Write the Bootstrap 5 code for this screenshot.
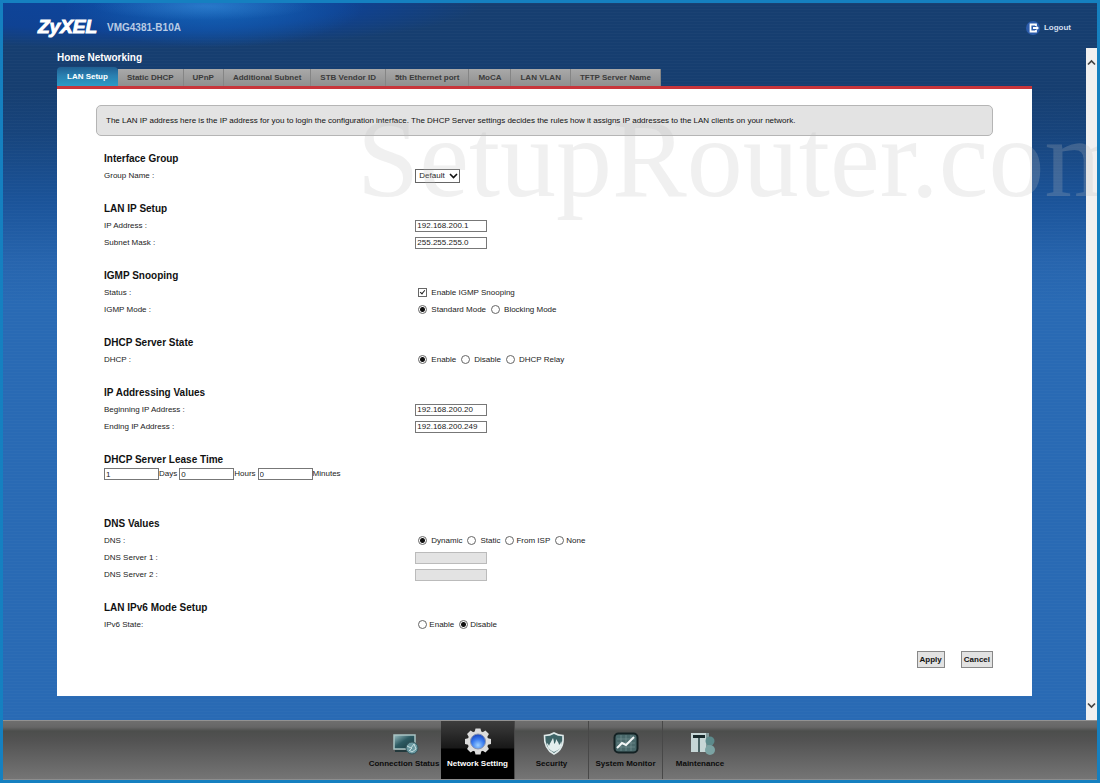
<!DOCTYPE html>
<html lang="en">
<head>
<meta charset="utf-8">
<meta name="viewport" content="width=device-width, initial-scale=1">
<title>VMG4381-B10A - Home Networking</title>
<link href="https://cdn.jsdelivr.net/npm/bootstrap@5.3.0/dist/css/bootstrap.min.css" rel="stylesheet">
<style>
  body { font-family: "Liberation Sans", Arial, sans-serif; font-size: 8px; line-height: 12px; color: #222; }
  .frame { border: 3px solid #1580c0; min-height: 100vh; overflow: hidden;
    background:
      repeating-linear-gradient(rgba(255,255,255,.02) 0 1px, transparent 1px 3px),
      linear-gradient(#163e70 0, #163e70 85px, #17447c 130px, #1b549a 200px, #2765ae 260px, #296ab4 300px, #296ab4 100%); }
  .topbar { height: 45px; padding: 4px 26px 0 34px;
    background:
      radial-gradient(ellipse 110px 14px at 200px 3px, rgba(80,160,235,.35) 0, rgba(80,160,235,0) 100%),
      radial-gradient(ellipse 150px 40px at 210px 4px, #1464b8 0, rgba(20,90,180,0) 100%),
      radial-gradient(ellipse 350px 46px at 130px 0, #0d459c 0, #0f4293 60%, rgba(22,62,112,0) 100%); }
  .model { font-size: 10px; font-weight: bold; color: #b9cbe4; }
  .logout { color: #d3deee; font-weight: bold; text-decoration: none; }
  .stage { padding: 0 54px 24px; }
  .page-title { font-size: 10px; line-height: 12px; font-weight: bold; color: #fff; margin: 4px 0 3px; }
  .tabs { border-bottom: 3px solid #c8353b; height: 22px; }
  .tabs .nav-link { height: 17px; line-height: 17px; padding: 0 9px; font-size: 8px; font-weight: bold; color: #3b3b3b;
    border-right: 1px solid #858585; border-radius: 0; background: linear-gradient(#a9a9a9, #8f8f8f); }
  .tabs .nav-link.active { height: 19px; line-height: 20px; padding: 0 10px; color: #fff; border: 0; border-radius: 4px 4px 0 0;
    background: linear-gradient(#1f5f92 0, #2a7fb0 45%, #2b9bc6 100%); }
  .sheet { background: #fff; padding: 16px 39px 28px; }
  .notice { font-size: 8px; line-height: 29px; border: 1px solid #b5b5b5; border-radius: 5px; background: #e3e3e3; padding: 0 9px; color: #111; }
  .fields { padding: 14px 8px 2px; }
  .grp { border: 0; margin: 0 0 16px; padding: 0; }
  .grp h2 { font-size: 10px; line-height: 17px; font-weight: bold; color: #111; margin: 0; }
  .line { display: flex; align-items: center; height: 17px; gap: 3px; }
  .line .name { width: 35%; flex: none; }
  .lease { padding-bottom: 19px; }
  .lease label { margin-right: 2px; }
  .choices { padding-left: 3px; }
  .choices label { margin: 0 5px 0 4px; }
  .choices label.tight { margin-left: 2px; }
  .choices input, .box { appearance: none; flex: none; margin: 0; }
  .choices input { width: 9px; height: 9px; border: 1px solid #666; background: #fff; }
  .choices input[type=radio] { border-radius: 50%; }
  .choices input[type=radio]:checked { background: radial-gradient(circle, #111 0 2px, #fff 3px); }
  .choices input[type=checkbox] { position: relative; }
  .choices input[type=checkbox]:checked::after { content: ""; position: absolute; left: 2px; top: 0; width: 3px; height: 5px;
    border: solid #222; border-width: 0 1px 1px 0; transform: rotate(40deg); }
  .box { width: 72px; height: 12px; border: 1px solid #777; border-radius: 0; padding: 0 1px; font-size: 8px; line-height: 10px; color: #222; background: #fff; }
  .box:disabled { background: #e3e3e3; border-color: #bbb; }
  .box-sm { width: 55px; }
  .pick { position: relative; }
  .pick select { appearance: none; width: 45px; height: 14px; border: 1px solid #666; border-radius: 0; background: #fff; padding: 0 3px; font-size: 8px; line-height: 12px; color: #222; }
  .pick svg { position: absolute; right: 2px; top: 4px; pointer-events: none; }
  .cmd { font-size: 8px; line-height: 15px; font-weight: bold; color: #111; background: #e2e2e2; border: 1px solid #888; border-radius: 0; padding: 0 2px; }
  .rail { width: 11px; flex: none; background: #f0f0f0; padding: 11px 0; }
  .dock { height: 60px; border-top: 1px solid #929292; border-bottom: 1px solid #8d8d8d; padding-left: 4px;
    background: linear-gradient(#6e6e6e 0, #666 6px, #4c4e4c 10px, #535353 20px, #757575 100%); }
  .dock a { width: 74px; color: #0c0c0c; font-weight: bold; text-decoration: none; white-space: nowrap; border-right: 1px solid #484848; padding-top: 9px; }
  .dock a:last-child, .dock a:first-child { border: 0; }
  .dock svg { height: 26px; margin-bottom: 2px; }
  .dock a.current { color: #fff; background: linear-gradient(#3d3d3d 0, #181818 27px, #000 28px); padding-top: 6px; }
  .dock a.current svg { height: 29px; }
  .ghost-mark { position: absolute; left: 354px; top: 91px; font: 112px/128px "Liberation Serif", serif; color: rgba(190,190,190,.23); white-space: nowrap; pointer-events: none; }
</style>
</head>
<body>
<div class="frame d-flex flex-column position-relative">
  <header class="topbar d-flex align-items-center justify-content-between">
    <div class="d-flex align-items-center gap-2">
      <svg width="62" height="26" viewBox="0 0 62 26" overflow="visible" role="img" aria-label="ZyXEL"><text x="1" y="18" font-family="Liberation Sans, sans-serif" font-weight="bold" font-style="italic" font-size="19" fill="#fff" stroke="#fff" stroke-width="1">ZyXEL</text></svg>
      <span class="model">VMG4381-B10A</span>
    </div>
    <a class="logout d-flex align-items-center gap-1" href="#">
      <svg width="14" height="14" viewBox="0 0 14 14"><circle cx="7" cy="7" r="7" fill="#2c5cab"/><path d="M10 5V3.500H4.500v7H10V9M7 7h5" fill="none" stroke="#fff" stroke-width="1.800"/><path d="M10.500 4.800L13 7l-2.500 2.200z" fill="#fff"/></svg>
      Logout
    </a>
  </header>

  <div class="d-flex flex-grow-1">
    <main class="stage flex-grow-1">
      <h1 class="page-title">Home Networking</h1>
      <nav class="tabs nav flex-nowrap align-items-end">
        <a class="nav-link active" href="#">LAN Setup</a>
        <a class="nav-link" href="#">Static DHCP</a>
        <a class="nav-link" href="#">UPnP</a>
        <a class="nav-link" href="#">Additional Subnet</a>
        <a class="nav-link" href="#">STB Vendor ID</a>
        <a class="nav-link" href="#">5th Ethernet port</a>
        <a class="nav-link" href="#">MoCA</a>
        <a class="nav-link" href="#">LAN VLAN</a>
        <a class="nav-link" href="#">TFTP Server Name</a>
      </nav>
      <form class="sheet">
        <div class="notice">The LAN IP address here is the IP address for you to login the configuration interface. The DHCP Server settings decides the rules how it assigns IP addresses to the LAN clients on your network.</div>
        <div class="fields">
          <section class="grp">
            <h2>Interface Group</h2>
            <div class="line"><label class="name" for="group">Group Name :</label>
              <span class="pick d-flex"><select id="group"><option>Default</option></select><svg width="9" height="6" viewBox="0 0 9 6"><path d="M1 1l3.500 3.500L8 1" fill="none" stroke="#111" stroke-width="1.600"/></svg></span></div>
          </section>
          <section class="grp">
            <h2>LAN IP Setup</h2>
            <div class="line"><label class="name" for="ip">IP Address :</label><input class="box" id="ip" type="text" value="192.168.200.1"></div>
            <div class="line"><label class="name" for="mask">Subnet Mask :</label><input class="box" id="mask" type="text" value="255.255.255.0"></div>
          </section>
          <section class="grp">
            <h2>IGMP Snooping</h2>
            <div class="line"><span class="name">Status :</span><span class="choices d-flex align-items-center"><input type="checkbox" id="snoop" checked><label for="snoop">Enable IGMP Snooping</label></span></div>
            <div class="line"><span class="name">IGMP Mode :</span><span class="choices d-flex align-items-center"><input type="radio" name="mode" id="m1" checked><label for="m1">Standard Mode</label><input type="radio" name="mode" id="m2"><label for="m2">Blocking Mode</label></span></div>
          </section>
          <section class="grp">
            <h2>DHCP Server State</h2>
            <div class="line"><span class="name">DHCP :</span><span class="choices d-flex align-items-center"><input type="radio" name="dhcp" id="d1" checked><label for="d1">Enable</label><input type="radio" name="dhcp" id="d2"><label for="d2">Disable</label><input type="radio" name="dhcp" id="d3"><label for="d3">DHCP Relay</label></span></div>
          </section>
          <section class="grp">
            <h2>IP Addressing Values</h2>
            <div class="line"><label class="name" for="first">Beginning IP Address :</label><input class="box" id="first" type="text" value="192.168.200.20"></div>
            <div class="line"><label class="name" for="last">Ending IP Address :</label><input class="box" id="last" type="text" value="192.168.200.249"></div>
          </section>
          <section class="grp lease">
            <h2>DHCP Server Lease Time</h2>
            <div class="d-flex align-items-center">
              <input class="box box-sm" id="days" type="text" value="1"><label for="days">Days</label>
              <input class="box box-sm" id="hours" type="text" value="0"><label for="hours">Hours</label>
              <input class="box box-sm" id="mins" type="text" value="0"><label for="mins">Minutes</label>
            </div>
          </section>
          <section class="grp">
            <h2>DNS Values</h2>
            <div class="line"><span class="name">DNS :</span><span class="choices d-flex align-items-center"><input type="radio" name="dns" id="n1" checked><label for="n1">Dynamic</label><input type="radio" name="dns" id="n2"><label for="n2">Static</label><input type="radio" name="dns" id="n3"><label class="tight" for="n3">From ISP</label><input type="radio" name="dns" id="n4"><label class="tight" for="n4">None</label></span></div>
            <div class="line"><label class="name" for="dns1">DNS Server 1 :</label><input class="box" id="dns1" type="text" disabled></div>
            <div class="line"><label class="name" for="dns2">DNS Server 2 :</label><input class="box" id="dns2" type="text" disabled></div>
          </section>
          <section class="grp">
            <h2>LAN IPv6 Mode Setup</h2>
            <div class="line"><span class="name">IPv6 State:</span><span class="choices d-flex align-items-center"><input type="radio" name="v6" id="v1"><label class="tight" for="v1">Enable</label><input type="radio" name="v6" id="v2" checked><label class="tight" for="v2">Disable</label></span></div>
          </section>
        </div>
        <div class="d-flex justify-content-end gap-3">
          <button class="cmd" type="button">Apply</button>
          <button class="cmd" type="button">Cancel</button>
        </div>
      </form>
    </main>
    <div class="rail d-flex flex-column justify-content-between align-items-center">
      <svg width="9" height="7" viewBox="0 0 9 7"><path d="M1 5.500l3.500-3.500L8 5.500" fill="none" stroke="#444" stroke-width="1.700"/></svg>
      <svg width="9" height="7" viewBox="0 0 9 7"><path d="M1 1.500L4.500 5 8 1.500" fill="none" stroke="#444" stroke-width="1.700"/></svg>
    </div>
  </div>

  <nav class="dock d-flex justify-content-center">
    <a class="d-flex flex-column align-items-center" href="#">
      <svg width="30" height="26" viewBox="0 0 30 26"><defs><linearGradient id="scr" x2="1" y2="1"><stop stop-color="#9cc0c4"/><stop offset=".45" stop-color="#2d5a62"/><stop offset="1" stop-color="#16363c"/></linearGradient></defs><path d="M5 5h21v14H5z" fill="url(#scr)" stroke="#a9c3c4" stroke-width="1.500"/><path d="M6 21h13" stroke="#23393c" stroke-width="2"/><circle cx="23" cy="18" r="6" fill="#6a99a1" stroke="#34545a"/><path d="M18 16l4 2 3-4 2 5-4 3-3-2M20 21l3-3" stroke="#c7dfe0" fill="none" stroke-width="1"/></svg>
      Connection Status</a>
    <a class="current d-flex flex-column align-items-center" href="#">
      <svg width="28" height="29" viewBox="-14 -14.500 28 29"><defs><radialGradient id="orb" cx=".5" cy=".75" r=".8"><stop stop-color="#9dd0ff"/><stop offset=".5" stop-color="#3a7cf0"/><stop offset="1" stop-color="#1238b0"/></radialGradient></defs><g fill="#dcdcdc"><circle r="10.500"/><g id="tooth"><path d="M-2.500-13h5l1 4h-7zM-2.500 13h5l1-4h-7z"/></g><use href="#tooth" transform="rotate(45)"/><use href="#tooth" transform="rotate(90)"/><use href="#tooth" transform="rotate(135)"/></g><circle r="7.500" fill="url(#orb)" stroke="#8894b0"/></svg>
      Network Setting</a>
    <a class="d-flex flex-column align-items-center" href="#">
      <svg width="22" height="26" viewBox="2 0 22 26" overflow="visible"><path d="M15 3c3 2 6 2.500 9 2.500C25 15 21 21 15 24 9 21 5 15 5.500 5.500 9 5.500 12 5 15 3z" fill="#3e6467" stroke="#dfe9e9" stroke-width="1.600"/><path d="M15 22c-5-2-7-5-7-9 1 1 2 2 2 3 1-3 2-4 4-8 1 3 1 4 1 6 1-1 2-2 2-5 2 3 3 4 3 6 1-1 2-2 2-4 2 4-1 9-7 11z" fill="#e4eeee"/></svg>
      Security</a>
    <a class="d-flex flex-column align-items-center" href="#">
      <svg width="28" height="26" viewBox="0 0 28 26"><rect x="2.500" y="3.500" width="23" height="19" rx="4" fill="#49686a" stroke="#142224" stroke-width="2"/><path d="M5 9h18M5 13h18M5 17h18M9 5v16M14 5v16M19 5v16" stroke="#799698" stroke-width=".6"/><path d="M5 18l5-5 4 2 8-8" fill="none" stroke="#f2f6f6" stroke-width="2"/></svg>
      System Monitor</a>
    <a class="d-flex flex-column align-items-center" href="#">
      <svg width="28" height="26" viewBox="-5 0 28 26" overflow="visible"><path d="M0 3h15v19H0z" fill="#c6d6d6"/><path d="M2 5h12v3H2z" fill="#17282a"/><path d="M7 8h2v14H7z" fill="#4a6365"/><path d="M15 3h3v19h-3z" fill="#809798"/><circle cx="19" cy="11" r="4.500" fill="#5c8a8b"/><circle cx="19" cy="20" r="5" fill="#7ba3a3"/></svg>
      Maintenance</a>
  </nav>
  <div class="ghost-mark" aria-hidden="true">SetupRouter.com</div>
</div>
<script src="https://cdn.jsdelivr.net/npm/bootstrap@5.3.0/dist/js/bootstrap.bundle.min.js"></script>
</body>
</html>
